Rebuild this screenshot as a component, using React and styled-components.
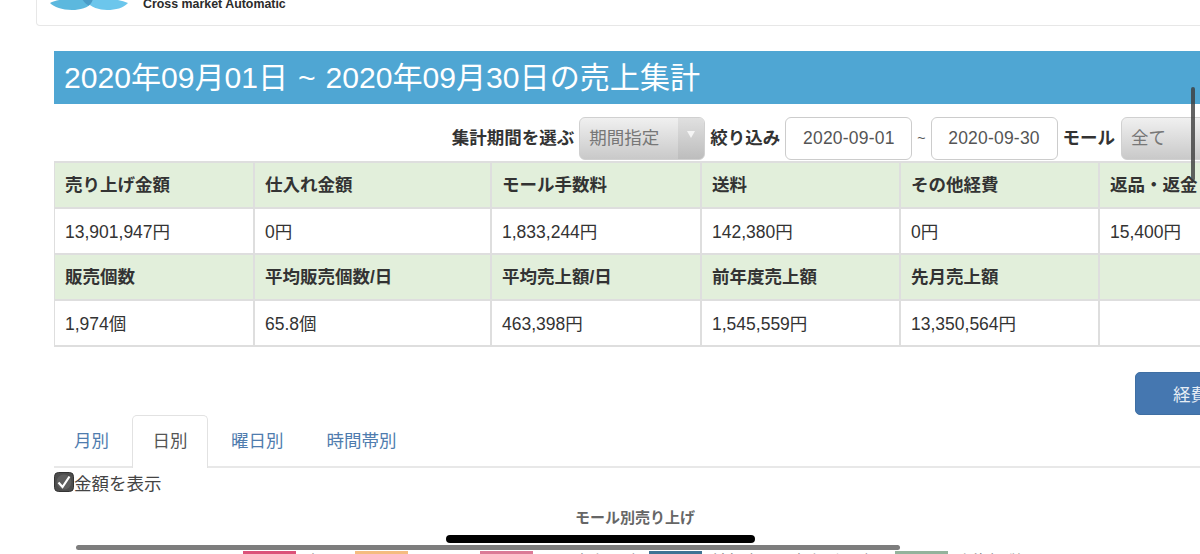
import React from "react";
import styled, { createGlobalStyle } from "styled-components";

const GlobalStyle = createGlobalStyle`
  html, body {
    margin: 0;
    padding: 0;
    background: #fff;
  }
  body {
    font-family: "Liberation Sans", "Noto Sans CJK JP", sans-serif;
    color: #333;
  }
`;

const Page = styled.div`
  position: relative;
  width: 1200px;
  height: 554px;
  overflow: hidden;
  background: #fff;
`;

const Inner = styled.div`
  width: 1300px;
  padding-left: 36px;
  box-sizing: border-box;
`;

const HeaderCard = styled.header`
  height: 26px;
  box-sizing: border-box;
  border: 1px solid #e7e7e7;
  border-top: none;
  border-radius: 0 0 4px 4px;
  display: flex;
  align-items: flex-end;
  padding: 0 0 15px 13px;
  gap: 14px;
`;

const Logo = styled.svg`
  display: block;
  width: 79px;
  height: 11px;
  flex: none;
`;

const LogoText = styled.span`
  font-family: "Liberation Sans", sans-serif;
  font-weight: 700;
  font-size: 12.4px;
  line-height: 10px;
  height: 10px;
  color: #2b2b2b;
  margin-bottom: 1px;
  white-space: nowrap;
`;

const Content = styled.main`
  margin: 25px 0 0 18px;
`;

const TitleBar = styled.h1`
  margin: 0;
  height: 53px;
  padding-left: 10px;
  background: #4fa6d3;
  color: #fff;
  font-size: 30.1px;
  font-weight: 400;
  word-spacing: 1.5px;
  line-height: 53px;
  white-space: nowrap;
`;

const FilterRow = styled.div`
  height: 57px;
  padding: 13px 48px 0 0;
  box-sizing: border-box;
  display: flex;
  justify-content: flex-end;
  align-items: flex-start;
  gap: 5px;
`;

const FilterLabel = styled.label`
  font-size: 17.5px;
  font-weight: 700;
  line-height: 43px;
  color: #333;
  white-space: nowrap;
`;

const Select = styled.div`
  width: ${(props) => props.$width}px;
  height: 43px;
  box-sizing: border-box;
  display: flex;
  justify-content: space-between;
  border: 1px solid #d0d0d0;
  border-radius: 6px;
  background: linear-gradient(#f0f0f0, #c9c9c9);
  color: #777;
  font-size: 17.5px;
  line-height: 41px;
  padding-left: 9px;
  margin-left: ${(props) => props.$offset || 0}px;
  overflow: hidden;
`;

const SelectArrow = styled.span`
  width: 26px;
  display: flex;
  align-items: center;
  justify-content: center;
  background: linear-gradient(#e0e0e0, #bdbdbd);

  &::after {
    content: "";
    border-left: 4px solid transparent;
    border-right: 4px solid transparent;
    border-top: 7px solid #f5f5f5;
    margin-top: -8px;
  }
`;

const DateInput = styled.div`
  width: 127px;
  height: 43px;
  box-sizing: border-box;
  border: 1px solid #ccc;
  border-radius: 6px;
  background: #fff;
  color: #555;
  font-size: 17.5px;
  letter-spacing: 0.2px;
  line-height: 41px;
  text-align: center;
`;

const Tilde = styled.span`
  font-size: 14px;
  line-height: 43px;
  color: #555;
`;

const SummaryTable = styled.table`
  border-collapse: collapse;
  table-layout: fixed;
  width: 1245px;
  font-size: 17.5px;
`;

const Th = styled.th`
  height: 46px;
  box-sizing: border-box;
  padding: 0 10px 3px;
  background: #e2efdb;
  border: 2px solid #dedede;
  border-left-width: ${(props) => (props.$first ? 1 : 2)}px;
  font-weight: 700;
  text-align: left;
  color: #333;
`;

const Td = styled.td`
  height: 46px;
  box-sizing: border-box;
  padding: 0 10px 2px;
  background: #fff;
  border: 2px solid #dedede;
  border-left-width: ${(props) => (props.$first ? 1 : 2)}px;
  color: #333;
`;

const ActionRow = styled.div`
  height: 68px;
  padding: 25px 0 0 1081px;
  box-sizing: border-box;
`;

const ActionButton = styled.button`
  width: 130px;
  height: 43px;
  border: 1px solid #3f6fa3;
  border-radius: 5px;
  background: #4577b0;
  color: #e6edf5;
  font-family: inherit;
  font-size: 17.5px;
  text-align: left;
  padding-left: 37px;
`;

const Tabs = styled.ul`
  display: flex;
  gap: 3px;
  margin: 0;
  padding: 0;
  list-style: none;
  border-bottom: 2px solid #e8e8e8;
  height: 51px;
`;

const Tab = styled.li`
  height: ${(props) => (props.$active ? 53 : 51)}px;
  box-sizing: border-box;
  padding: 0 ${(props) => (props.$active ? 19.5 : 19)}px;
  line-height: 50px;
  font-size: 17.5px;
  color: ${(props) => (props.$active ? "#555" : "#4f7cae")};
  background: ${(props) => (props.$active ? "#fff" : "transparent")};
  border: 1px solid ${(props) => (props.$active ? "#e2e2e2" : "transparent")};
  border-bottom: none;
  border-radius: 5px 5px 0 0;
`;

const CheckLine = styled.label`
  display: flex;
  align-items: center;
  height: 29px;
  font-size: 17.5px;
  color: #444;
`;

const CheckBox = styled.svg`
  display: block;
  width: 20px;
  height: 20px;
  flex: none;
  margin-top: -2px;
`;

const ChartTitle = styled.div`
  width: 1162px;
  margin-top: 11px;
  text-align: center;
  font-size: 15px;
  font-weight: 700;
  line-height: 20px;
  color: #666;
`;

const Legend = styled.div`
  margin: 23px 0 0 189px;
  display: flex;
  align-items: flex-start;
  white-space: nowrap;
`;

const LegendItem = styled.div`
  display: flex;
  gap: 9px;
  margin-right: ${(props) => props.$gap}px;
  font-size: 16px;
  line-height: 16px;
  color: #777;
`;

const LegendLabel = styled.span`
  margin-top: 3px;
`;

const Swatch = styled.span`
  display: block;
  width: 53px;
  height: 14px;
  background: ${(props) => props.$color};
`;

const BarOverlay = styled.div`
  position: absolute;
  border-radius: 4px;
  background: ${(props) => props.$color};
`;

const HomeIndicator = styled(BarOverlay)`
  left: 446px;
  top: 535px;
  width: 309px;
  height: 8px;
`;

const HScroll = styled(BarOverlay)`
  left: 76px;
  top: 545px;
  width: 824px;
  height: 5px;
`;

const VScroll = styled(BarOverlay)`
  left: 1191px;
  top: 87px;
  width: 4px;
  height: 94px;
`;

const cols = [199.5, 237, 210, 199, 199, 200.5];

const rows = [
  {
    heads: ["売り上げ金額", "仕入れ金額", "モール手数料", "送料", "その他経費", "返品・返金"],
    values: ["13,901,947円", "0円", "1,833,244円", "142,380円", "0円", "15,400円"],
  },
  {
    heads: ["販売個数", "平均販売個数/日", "平均売上額/日", "前年度売上額", "先月売上額", ""],
    values: ["1,974個", "65.8個", "463,398円", "1,545,559円", "13,350,564円", ""],
  },
];

const legendItems = [
  { color: "#dc5279", label: "楽天", gap: 18 },
  { color: "#f5bc80", label: "Yahoo", gap: 18 },
  { color: "#dc7a96", label: "日間売上累計", gap: 11 },
  { color: "#3f7394", label: "前年度同日売上げ累計", gap: 24 },
  { color: "#94b39c", label: "上海增税", gap: 0 },
];

export default function App() {
  return (
    <Page>
      <GlobalStyle />
      <Inner>
        <HeaderCard>
          <Logo viewBox="0 0 79 11">
            <path d="M0 4 C10 -1 30 -2 43 3 C38 9 30 11 22 11 C12 11 4 8 0 4 Z" fill="#5cb8de" />
            <path d="M36 3 C48 -2 66 -1 78 4 C73 9 66 11 57 11 C49 11 41 8 36 3 Z" fill="#6cc6ec" />
            <path d="M32 0 H43 C42 3 41 5 38.500 6.500 C36 5 34 3 32 0 Z" fill="#4a9cc7" />
          </Logo>
          <LogoText>Cross market Automatic</LogoText>
        </HeaderCard>
        <Content>
          <TitleBar>2020年09月01日 ~ 2020年09月30日の売上集計</TitleBar>
          <FilterRow>
            <FilterLabel>集計期間を選ぶ</FilterLabel>
            <Select $width={126}>
              期間指定
              <SelectArrow />
            </Select>
            <FilterLabel>絞り込み</FilterLabel>
            <DateInput>2020-09-01</DateInput>
            <Tilde>~</Tilde>
            <DateInput>2020-09-30</DateInput>
            <FilterLabel>モール</FilterLabel>
            <Select $width={131} $offset={1}>
              全て
            </Select>
          </FilterRow>
          <SummaryTable>
            <colgroup>
              {cols.map((w, i) => (
                <col key={i} style={{ width: w }} />
              ))}
            </colgroup>
            <tbody>
              {rows.map((row) => (
                <React.Fragment key={row.heads[0]}>
                  <tr>
                    {row.heads.map((h, i) => (
                      <Th key={i} $first={i === 0}>
                        {h}
                      </Th>
                    ))}
                  </tr>
                  <tr>
                    {row.values.map((v, i) => (
                      <Td key={i} $first={i === 0}>
                        {v}
                      </Td>
                    ))}
                  </tr>
                </React.Fragment>
              ))}
            </tbody>
          </SummaryTable>
          <ActionRow>
            <ActionButton>経費</ActionButton>
          </ActionRow>
          <Tabs>
            <Tab>月別</Tab>
            <Tab $active>日別</Tab>
            <Tab>曜日別</Tab>
            <Tab>時間帯別</Tab>
          </Tabs>
          <CheckLine>
            <CheckBox viewBox="0 0 20 20">
              <rect x="0.500" y="0.500" width="19" height="19" rx="4" fill="#4d4d4d" stroke="#333" />
              <circle cx="10" cy="10" r="7.500" fill="#5e5e5e" />
              <path d="M4.500 10.500 L8.500 15 L15.500 4.500" fill="none" stroke="#fff" strokeWidth="2.200" />
            </CheckBox>
            金額を表示
          </CheckLine>
          <ChartTitle>モール別売り上げ</ChartTitle>
          <Legend>
            {legendItems.map((item) => (
              <LegendItem key={item.color} $gap={item.gap}>
                <Swatch $color={item.color} />
                <LegendLabel>{item.label}</LegendLabel>
              </LegendItem>
            ))}
          </Legend>
        </Content>
      </Inner>
      <HomeIndicator $color="#000" />
      <HScroll $color="#7d7d7d" />
      <VScroll $color="rgba(60,60,60,0.8)" />
    </Page>
  );
}
